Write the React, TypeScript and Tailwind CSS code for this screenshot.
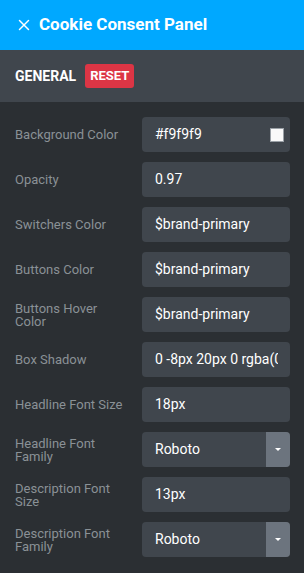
import { X } from "lucide-react";

type Row = {
  label: string;
  value: string;
  kind?: "color" | "select";
};

const rows: Row[] = [
  { label: "Background Color", value: "#f9f9f9", kind: "color" },
  { label: "Opacity", value: "0.97" },
  { label: "Switchers Color", value: "$brand-primary" },
  { label: "Buttons Color", value: "$brand-primary" },
  { label: "Buttons Hover Color", value: "$brand-primary" },
  { label: "Box Shadow", value: "0 -8px 20px 0 rgba(0,0,0,.1)" },
  { label: "Headline Font Size", value: "18px" },
  { label: "Headline Font Family", value: "Roboto", kind: "select" },
  { label: "Description Font Size", value: "13px" },
  { label: "Description Font Family", value: "Roboto", kind: "select" },
];

function Field({ row }: { row: Row }) {
  return (
    <div className="flex items-center">
      <div className="w-[127px] pr-[15px] text-[13px] leading-[13px] text-[#8a9196]">
        {row.label}
      </div>
      <div className="flex h-[35px] w-[148px] items-center overflow-hidden rounded bg-[#40464d]">
        <div className={row.kind === "select" ? "min-w-0 flex-1 pl-[13px]" : "min-w-0 flex-1 pl-[13px] pr-[12px]"}>
          <div className="overflow-hidden whitespace-nowrap text-[14px] text-white">
            {row.value}
          </div>
        </div>
        {row.kind === "color" && (
          <div className="-ml-[6px] mr-[6px] h-[14px] w-[14px] shrink-0 border border-[#9aa0a6] bg-[#f9f9f9]" />
        )}
        {row.kind === "select" && (
          <div className="flex h-full w-[24px] items-center justify-center bg-[#6c747e]">
            <div className="h-0 w-0 border-x-[3px] border-t-[3px] border-x-transparent border-t-white" />
          </div>
        )}
      </div>
    </div>
  );
}

export default function App() {
  return (
    <div className="h-[573px] w-[304px] overflow-hidden bg-[#2b2f33] font-['Roboto',sans-serif]">
      {/* HEADER */}
      <div className="flex h-[50px] items-center gap-[6px] bg-[#00a8ff] pl-[15px] text-white">
        <X size={18} strokeWidth={2} />
        <span className="text-[17px] font-bold">Cookie Consent Panel</span>
      </div>

      {/* SECTION BAR */}
      <div className="flex h-[52px] items-center gap-[9px] bg-[#40464d] px-[15px]">
        <span className="text-[14px] font-bold text-white">GENERAL</span>
        <span className="rounded-[3px] bg-[#dc3545] px-[5px] py-[2px] text-[13px] font-bold text-white">
          RESET
        </span>
      </div>

      {/* FIELDS */}
      <div className="flex flex-col gap-[10px] pl-[15px] pt-[15px]">
        {rows.map((r) => (
          <Field key={r.label} row={r} />
        ))}
      </div>
    </div>
  );
}
